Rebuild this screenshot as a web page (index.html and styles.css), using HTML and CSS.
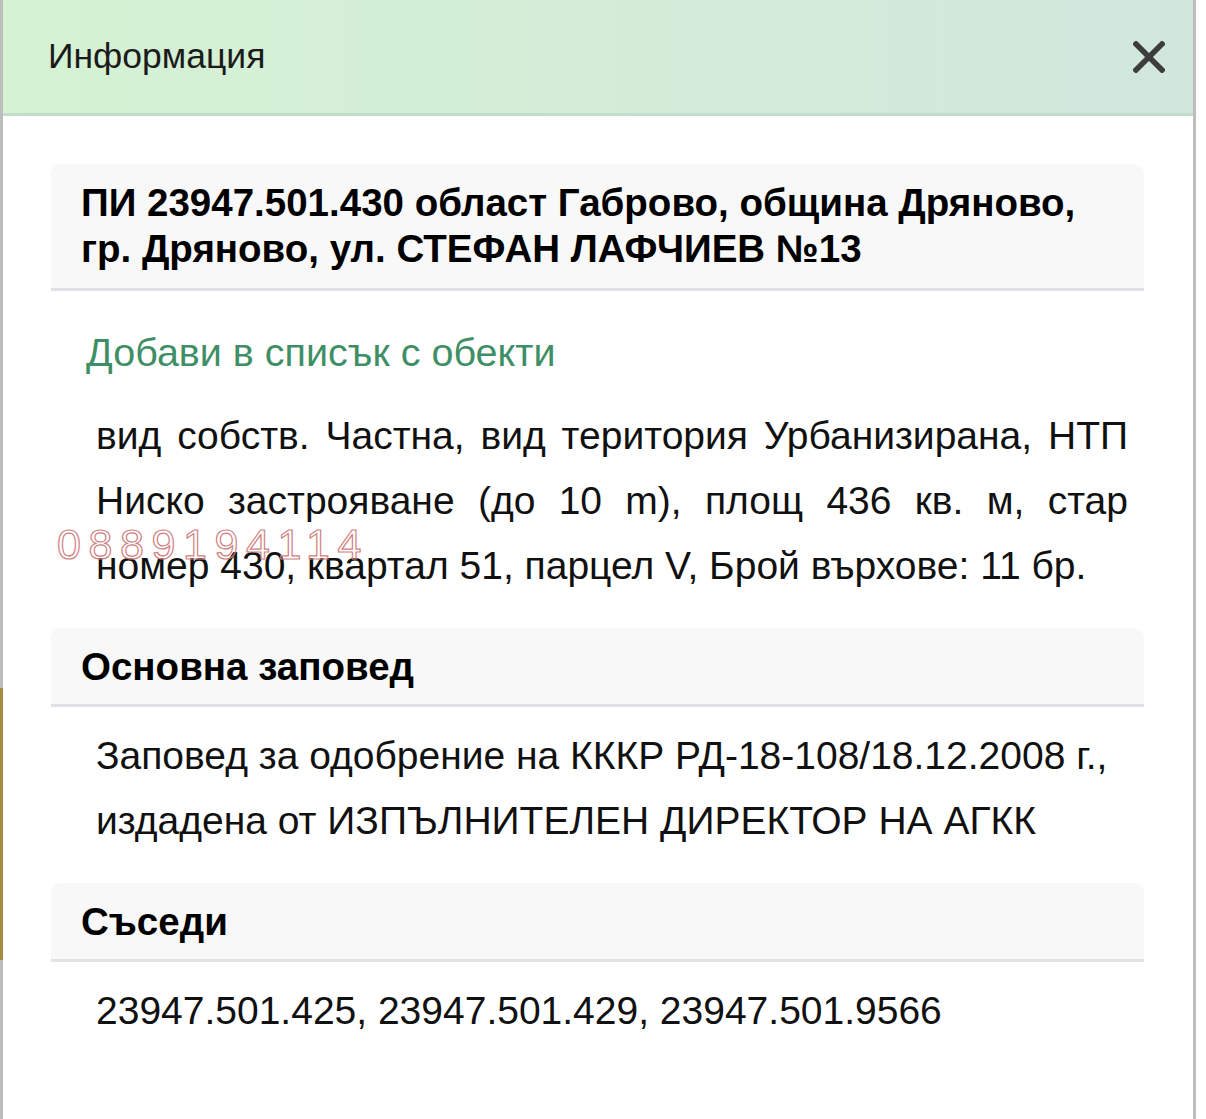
FILE: index.html
```html
<!DOCTYPE html>
<html lang="bg">
<head>
  <meta charset="UTF-8" />
  <meta name="viewport" content="width=device-width, initial-scale=1.0"/>
  <title>Информация</title>
  <link rel="stylesheet" href="styles.css">
</head>
<body>
  <div class="modal">
    <!-- Заглавие -->
    <div class="modal-header">
      <h1>Информация</h1>
      <span class="close">
        <svg width="32" height="32" viewBox="0 0 32 32">
          <path d="M3 3 L29 29 M29 3 L3 29" stroke="#3d3d3d" stroke-width="5.5" stroke-linecap="square"/>
        </svg>
      </span>
    </div>

    <div class="modal-body">
      <!-- Имот -->
      <div class="section-title wide">ПИ 23947.501.430 област Габрово, община Дряново, гр. Дряново, ул. СТЕФАН ЛАФЧИЕВ №13</div>
      <a class="add-link" href="#">Добави в списък с обекти</a>
      <div class="info">
        <p class="justify">вид собств. Частна, вид територия Урбанизирана, НТП Ниско застрояване (до 10 m), площ 436 кв. м, стар номер 430, квартал 51, парцел V, Брой върхове: 11 бр.</p>
        <span class="watermark">0889194114</span>
      </div>

      <!-- Заповед -->
      <div class="section-title">Основна заповед</div>
      <p class="info">Заповед за одобрение на КККР РД-18-108/18.12.2008 г., издадена от ИЗПЪЛНИТЕЛЕН ДИРЕКТОР НА АГКК</p>

      <!-- Съседи -->
      <div class="section-title">Съседи</div>
      <p class="info">23947.501.425, 23947.501.429, 23947.501.9566</p>
    </div>
  </div>
</body>
</html>
```

FILE: styles.css
```css
body {
  margin: 0;
  font-family: 'Liberation Sans', Arial, sans-serif;
  color: #111;
  background: #fff linear-gradient(to bottom, #bdbdbd 688px, #a68a45 688px, #a68a45 960px, #bdbdbd 960px) no-repeat;
  background-size: 3px 100%;
  min-height: 1119px;
}
.modal {
  margin-left: 3px;
  width: 1190px;
  min-height: 1119px;
  background: white;
  border-right: 3px solid #bdbdbd;
}
.modal-header {
  display: flex;
  align-items: center;
  justify-content: space-between;
  height: 113px;
  padding: 0 28px 0 45px;
  background: linear-gradient(to right, #d5f2d3, #d1e7dd);
  border-bottom: 3px solid #c4dccc;
}
.modal-header h1 {
  margin: 0;
  font-size: 35.5px;
  font-weight: normal;
  color: #1b1b1b;
}
.close {
  display: flex;
  cursor: pointer;
}
.modal-body {
  padding: 48px 49px 40px 48px;
}
.section-title {
  padding: 16px 30px 14px;
  background: #f8f8f9;
  border-bottom: 3px solid #e1e1e6;
  border-radius: 10px 10px 0 0;
  font-size: 38.5px;
  font-weight: bold;
  line-height: 46px;
  color: #000;
}
.section-title.wide {
  padding-right: 56px;
  padding-bottom: 16px;
}
.add-link {
  display: block;
  margin: 38px 0 0 35px;
  font-size: 39.5px;
  line-height: 46px;
  color: #3f8f66;
  text-decoration: none;
}
.info {
  position: relative;
  margin: 16px 16px 30px 45px;
  font-size: 39px;
  line-height: 65px;
}
.info p {
  margin: 0;
}
.justify {
  text-align: justify;
}
.add-link + .info {
  margin-top: 28px;
}
.watermark {
  position: absolute;
  left: -39px;
  top: 120px;
  font-size: 43px;
  line-height: 42px;
  letter-spacing: 7.6px;
  color: transparent;
  -webkit-text-stroke: 1.2px #cf7f7f;
}
```
